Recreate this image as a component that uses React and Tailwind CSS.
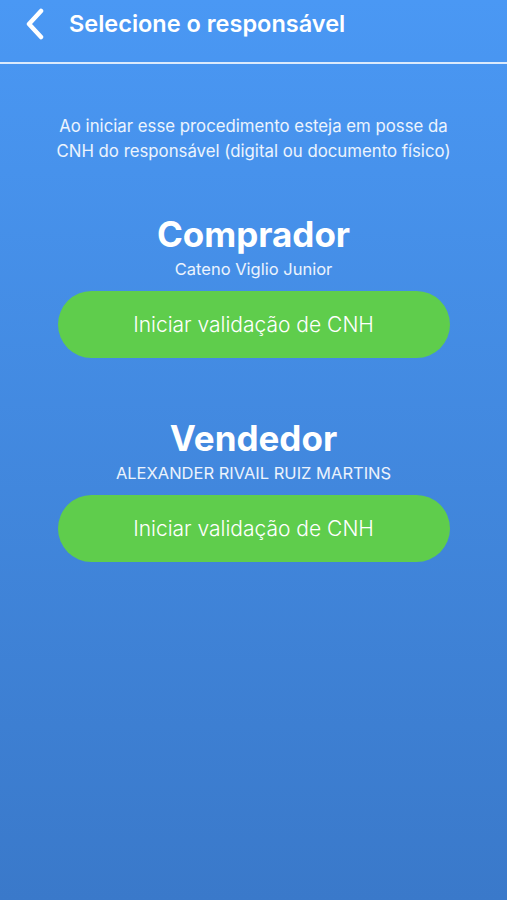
import React from "react";

function Section({ title, name }) {
  return (
    <div className="flex flex-col items-center">
      <h2 className="text-[35px] leading-[40px] font-bold text-white">{title}</h2>
      <p className="text-[16.5px] leading-[20px] text-white/90 mt-[5px]">{name}</p>
      <button className="mt-[12px] w-[392px] h-[67px] rounded-full bg-[#5fcd4c] text-white text-[21px] font-light flex items-center justify-center">
        Iniciar validação de CNH
      </button>
    </div>
  );
}

export default function App() {
  return (
    <div
      className="w-[507px] h-[900px] flex flex-col bg-gradient-to-b from-[#4a98f4] to-[#3a79ca] text-white"
      style={{ fontFamily: "Inter, 'Liberation Sans', sans-serif" }}
    >
      <header className="h-[64px] flex items-center border-b-2 border-white/80">
        <div className="w-[69px] h-full flex items-center pl-[23px] -mt-[14px]">
          <svg width="22" height="32" viewBox="0 0 22 32" fill="none">
            <path d="M18 3 L6 16 L18 29" stroke="white" strokeWidth="4.5" strokeLinecap="round" strokeLinejoin="round" />
          </svg>
        </div>
        <h1 className="text-[23.5px] font-semibold text-white -mt-[14px]">Selecione o responsável</h1>
      </header>
      <p className="mt-[50px] text-center text-[16.8px] leading-[25px] text-white/90">
        Ao iniciar esse procedimento esteja em posse da
        <br />
        CNH do responsável (digital ou documento físico)
      </p>
      <div className="mt-[50px]">
        <Section title="Comprador" name="Cateno Viglio Junior" />
      </div>
      <div className="mt-[60px]">
        <Section title="Vendedor" name="ALEXANDER RIVAIL RUIZ MARTINS" />
      </div>
    </div>
  );
}
